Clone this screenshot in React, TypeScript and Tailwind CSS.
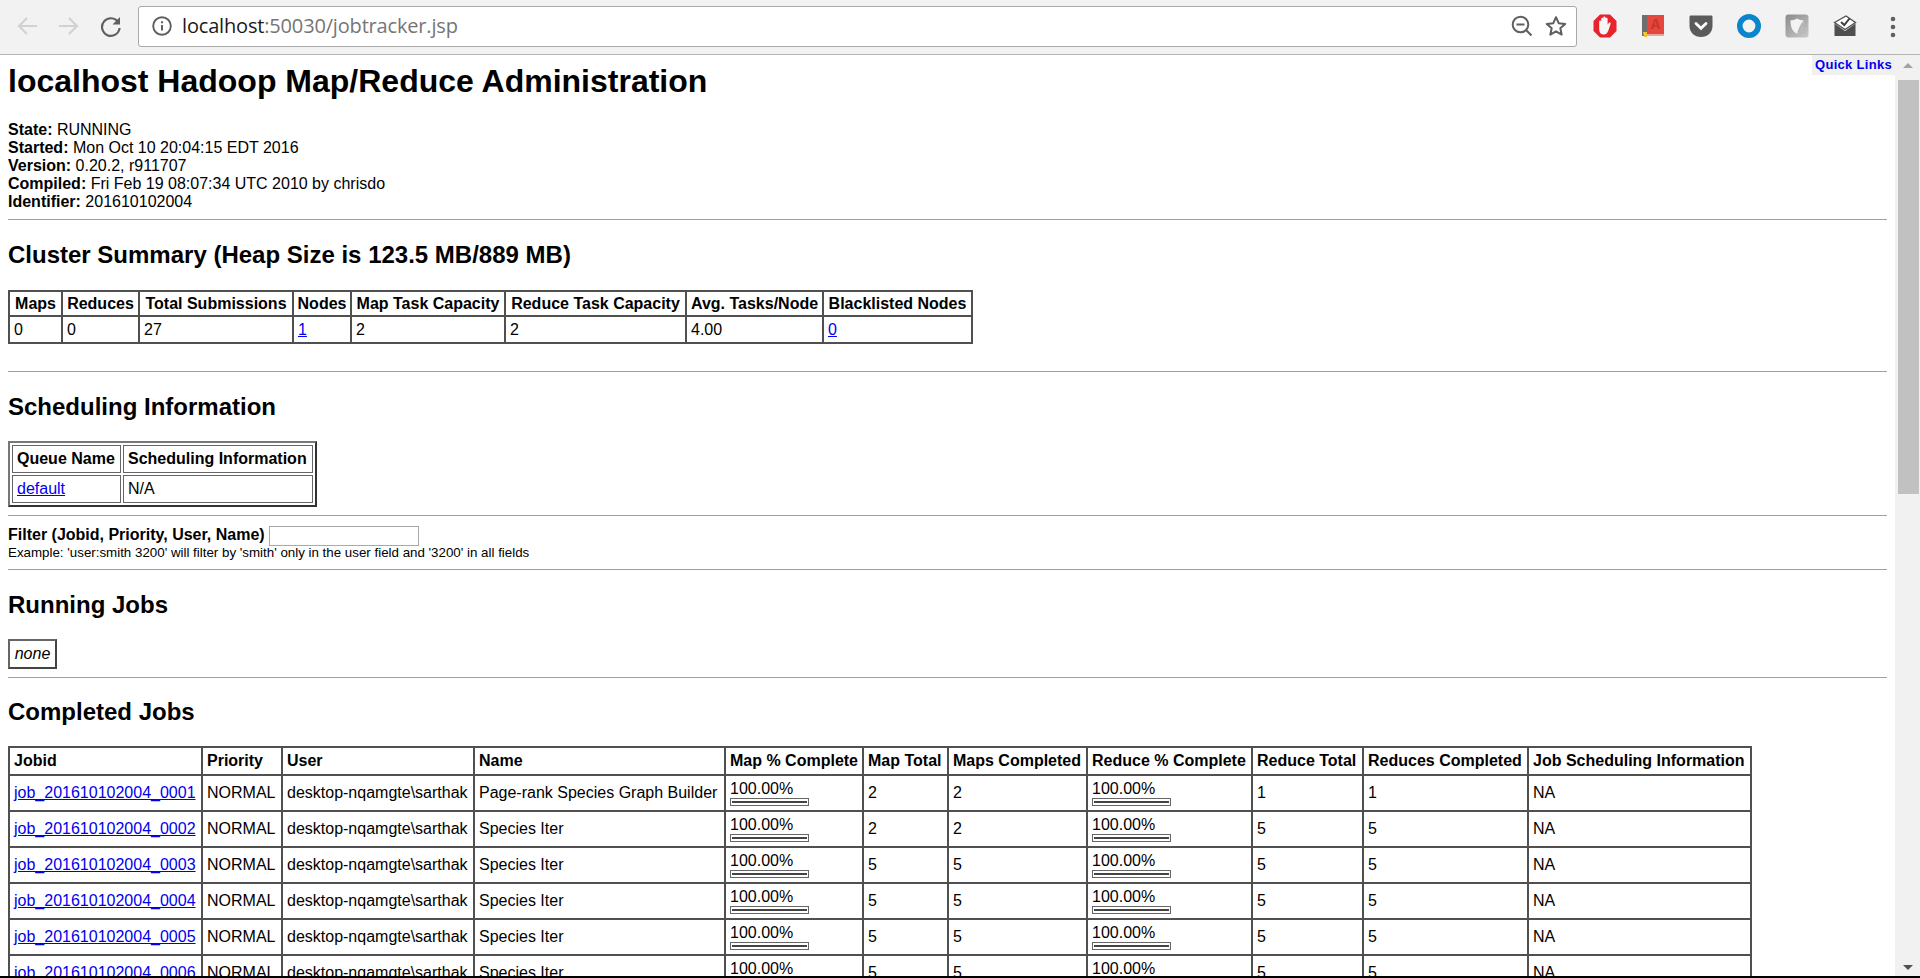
import React from "react";

const jobs = [
  ["0001", "Page-rank Species Graph Builder", "2", "2", "1", "1"],
  ["0002", "Species Iter", "2", "2", "5", "5"],
  ["0003", "Species Iter", "5", "5", "5", "5"],
  ["0004", "Species Iter", "5", "5", "5", "5"],
  ["0005", "Species Iter", "5", "5", "5", "5"],
  ["0006", "Species Iter", "5", "5", "5", "5"],
];

const th = "border-2 border-[#505050] px-[4px] text-left font-bold align-middle";
const thc = "border-2 border-[#505050] px-[2px] text-center font-bold align-middle";
const td = "border-2 border-[#505050] px-[4px] text-left font-normal align-middle";
const link = "text-[#0000ee] underline";

function Rule() {
  return <div className="h-[1px] bg-[#a0a0a0]" />;
}

function Progress() {
  return (
    <div className="leading-[18px]">
      <div>100.00%</div>
      <div className="flex h-[8px] w-[79px] items-center border border-[#666666] bg-white px-[1px]">
        <div className="h-[2px] w-full bg-[#444444]" />
      </div>
    </div>
  );
}

function Toolbar() {
  return (
    <div className="flex h-[55px] items-center border-b border-[#b4b4b4] bg-[#f2f2f2] pb-[2px] pl-[15px]">
      <svg width="24" height="24" viewBox="0 0 24 24" fill="none" stroke="#d2d2d2" strokeWidth="2.2">
        <path d="M22 12H4M12 4l-8 8 8 8" />
      </svg>
      <svg className="ml-[18px]" width="24" height="24" viewBox="0 0 24 24" fill="none" stroke="#d2d2d2" strokeWidth="2.2">
        <path d="M2 12h18M12 4l8 8-8 8" />
      </svg>
      <svg className="ml-[18px]" width="24" height="24" viewBox="0 0 24 24" fill="none">
        <path d="M19.2 8.2A8.8 8.8 0 1 0 20.6 14" stroke="#5f5f5f" strokeWidth="2.2" />
        <path d="M21 3v7.5h-7.500z" fill="#5f5f5f" />
      </svg>
      <div className="ml-[15px] flex h-[41px] w-[1439px] items-center rounded-[3px] border border-[#a9a9a9] bg-white pl-[13px] pr-[8px]">
        <svg width="20" height="20" viewBox="0 0 20 20" fill="none">
          <circle cx="10" cy="10" r="8.800" stroke="#5f5f5f" strokeWidth="1.900" />
          <path d="M10 9v5.500" stroke="#5f5f5f" strokeWidth="2" />
          <path d="M10 5.200v2" stroke="#5f5f5f" strokeWidth="2" />
        </svg>
        <span className="ml-[10px] font-['Open_Sans',sans-serif] text-[20px] tracking-[-0.17px] text-[#757575]">
          <span className="text-[#1a1a1a]">localhost</span>:50030/jobtracker.jsp
        </span>
        <svg className="ml-auto" width="22" height="22" viewBox="0 0 22 22" fill="none" stroke="#5f5f5f" strokeWidth="2">
          <circle cx="9.500" cy="9.500" r="7.800" />
          <path d="M5.500 9.500h8M15 15l5.500 5.500" />
        </svg>
        <svg className="ml-[11px]" width="24" height="24" viewBox="0 0 24 24" fill="none" stroke="#5f5f5f" strokeWidth="2">
          <path d="M12 3.200l2.700 6 6.500.7-4.900 4.300 1.400 6.400L12 17.300l-5.700 3.300 1.400-6.400-4.900-4.300 6.500-.7z" strokeLinejoin="round" />
        </svg>
      </div>
      <div className="ml-[16px] flex items-center gap-[24px]">
        <svg width="24" height="24" viewBox="0 0 24 24">
          <path d="M7 .5h10L23.500 7v10L17 23.500H7L.5 17V7z" fill="#e8232c" />
          <path d="M6.200 13V7.600c0-1.400 2-1.400 2 0V4.800c0-1.500 2.100-1.500 2.100 0V3.600c0-1.500 2.200-1.500 2.200 0v1.200c0-1.400 2.100-1.400 2.100 0v6l1.100-1.700c.9-1.100 2.500-.3 1.800 1.100l-2.300 6.800c-.7 1.900-2 3.500-4.300 3.500-3 0-4.700-2-4.700-5.300z" fill="#f6f6f6" />
        </svg>
        <svg width="24" height="24" viewBox="0 0 24 24">
          <rect x="2" y="1" width="21" height="20" fill="#e5473e" />
          <rect x="1" y="1" width="5" height="21" fill="#6e6e6e" />
          <rect x="5" y="20" width="18" height="2" fill="#e9a49e" />
          <path d="M2 18h4v5H3z" fill="#f2c233" />
          <text x="14.500" y="15" textAnchor="middle" fontFamily="Liberation Sans" fontSize="14" fontWeight="700" fill="#c8342c">A</text>
        </svg>
        <svg width="24" height="24" viewBox="0 0 24 24">
          <path d="M2 1.500h20c.600 0 1.500.400 1.500 1.500V12c0 6.500-5 11-11.500 11S.500 18.500.500 12V3c0-1.100.900-1.500 1.500-1.500z" fill="#5b5b5b" />
          <path d="M7 9.500l5 4.800 5-4.800" fill="none" stroke="#ffffff" strokeWidth="2.800" strokeLinecap="round" />
        </svg>
        <svg width="24" height="24" viewBox="0 0 24 24">
          <circle cx="12" cy="12" r="9.200" fill="none" stroke="#0a84cb" strokeWidth="5.600" />
        </svg>
        <svg width="24" height="24" viewBox="0 0 24 24">
          <defs>
            <linearGradient id="shieldbg" x1="0" y1="0" x2="0.800" y2="1">
              <stop offset="0" stopColor="#8a8a8a" />
              <stop offset="1" stopColor="#c4c4c4" />
            </linearGradient>
          </defs>
          <rect x="0.500" y="0.500" width="23" height="23" rx="3" fill="url(#shieldbg)" />
          <path d="M12 4.500c2.500 1.500 4.500 1.800 6.500 1.800 0 6.500-1.500 11-6.500 13.500-5-2.500-6.500-7-6.500-13.500 2 0 4-.3 6.500-1.800z" fill="#f3f3f3" />
          <path d="M18.500 6.300c0 6.500-1.500 11-6.500 13.500 1-4 3-9 6.500-13.500z" fill="#b5b5b5" />
        </svg>
        <svg width="24" height="24" viewBox="0 0 24 24">
          <path d="M1.500 9.500L12 17l10.500-7.500V22h-21z" fill="#4f4f4f" />
          <path d="M1.500 8.500L13 2l9.500 6.500L12 15.500z" fill="#ffffff" stroke="#4f4f4f" strokeWidth="1.300" />
          <path d="M8 8l3.300 3L16.500 4.500" fill="none" stroke="#3c3c3c" strokeWidth="2" />
        </svg>
        <svg width="24" height="24" viewBox="0 0 24 24" fill="#606060">
          <circle cx="12" cy="5" r="2.300" />
          <circle cx="12" cy="13" r="2.300" />
          <circle cx="12" cy="21" r="2.300" />
        </svg>
      </div>
    </div>
  );
}

function Summary() {
  const heads = ["Maps", "Reduces", "Total Submissions", "Nodes", "Map Task Capacity", "Reduce Task Capacity", "Avg. Tasks/Node", "Blacklisted Nodes"];
  const widths = [53, 77, 154, 58, 154, 181, 137, 149];
  return (
    <table className="mt-[21px] w-[964px] table-fixed border-collapse whitespace-nowrap">
      <colgroup>
        {widths.map((w, i) => (
          <col key={i} style={{ width: w }} />
        ))}
      </colgroup>
      <tbody>
        <tr className="h-[25px]">
          {heads.map((h) => (
            <th key={h} className={thc}>{h}</th>
          ))}
        </tr>
        <tr className="h-[27px]">
          <td className={td}>0</td>
          <td className={td}>0</td>
          <td className={td}>27</td>
          <td className={td}><span className={link}>1</span></td>
          <td className={td}>2</td>
          <td className={td}>2</td>
          <td className={td}>4.00</td>
          <td className={td}><span className={link}>0</span></td>
        </tr>
      </tbody>
    </table>
  );
}

function Scheduling() {
  const c = "border border-[#666666] px-[4px] text-left align-middle";
  return (
    <table className="mt-[20px] w-[309px] table-fixed border-separate border-spacing-[2px] border-2 border-t-[#777777] border-l-[#777777] border-r-[#333333] border-b-[#333333]">
      <colgroup>
        <col className="w-[109px]" />
        <col className="w-[190px]" />
      </colgroup>
      <tbody>
        <tr className="h-[28px]">
          <th className={`${c} font-bold`}>Queue Name</th>
          <th className={`${c} font-bold`}>Scheduling Information</th>
        </tr>
        <tr className="h-[28px]">
          <td className={c}><span className={link}>default</span></td>
          <td className={c}>N/A</td>
        </tr>
      </tbody>
    </table>
  );
}

function Jobs() {
  const heads = ["Jobid", "Priority", "User", "Name", "Map % Complete", "Map Total", "Maps Completed", "Reduce % Complete", "Reduce Total", "Reduces Completed", "Job Scheduling Information"];
  const widths = [193, 80, 192, 251, 138, 85, 139, 165, 111, 165, 223];
  return (
    <table className="mt-[20px] w-[1742px] table-fixed border-collapse whitespace-nowrap">
      <colgroup>
        {widths.map((w, i) => (
          <col key={i} style={{ width: w }} />
        ))}
      </colgroup>
      <tbody>
        <tr className="h-[28px]">
          {heads.map((h) => (
            <th key={h} className={th}>{h}</th>
          ))}
        </tr>
        {jobs.map((j) => (
          <tr key={j[0]} className="h-[36px]">
            <td className={td}><span className={link}>job_201610102004_{j[0]}</span></td>
            <td className={td}>NORMAL</td>
            <td className={td}>desktop-nqamgte\sarthak</td>
            <td className={td}>{j[1]}</td>
            <td className={td}><Progress /></td>
            <td className={td}>{j[2]}</td>
            <td className={td}>{j[3]}</td>
            <td className={td}><Progress /></td>
            <td className={td}>{j[4]}</td>
            <td className={td}>{j[5]}</td>
            <td className={td}>NA</td>
          </tr>
        ))}
      </tbody>
    </table>
  );
}

function Scrollbar() {
  return (
    <div className="flex w-[25px] shrink-0 flex-col items-center bg-[#f1f1f1]">
      <div className="mt-[8px] h-0 w-0 border-x-[5px] border-b-[5px] border-x-transparent border-b-[#a3a3a3]" />
      <div className="ml-[1px] mt-[12px] h-[414px] w-[21px] bg-[#c1c1c1]" />
      <div className="mb-[6px] mt-auto h-0 w-0 border-x-[5px] border-t-[5px] border-x-transparent border-t-[#505050]" />
    </div>
  );
}

export default function App() {
  return (
    <div className="flex h-[978px] w-[1920px] flex-col overflow-hidden bg-white font-['Liberation_Sans',Arial,sans-serif] text-[16px] leading-[18px] text-black">
      <Toolbar />
      <div className="relative flex min-h-0 flex-1">
        <div className="min-w-0 flex-1 overflow-hidden px-[8px]">
          <h1 className="mt-[8px] text-[32px] font-bold leading-[36px]">localhost Hadoop Map/Reduce Administration</h1>
          <div className="mt-[22px]">
            <div><b>State:</b> RUNNING</div>
            <div><b>Started:</b> Mon Oct 10 20:04:15 EDT 2016</div>
            <div><b>Version:</b> 0.20.2, r911707</div>
            <div><b>Compiled:</b> Fri Feb 19 08:07:34 UTC 2010 by chrisdo</div>
            <div><b>Identifier:</b> 201610102004</div>
          </div>
          <div className="mt-[8px]"><Rule /></div>
          <h2 className="mt-[21px] text-[24px] font-bold leading-[28px]">Cluster Summary (Heap Size is 123.5 MB/889 MB)</h2>
          <Summary />
          <div className="mt-[27px]"><Rule /></div>
          <h2 className="mt-[21px] text-[24px] font-bold leading-[28px]">Scheduling Information</h2>
          <Scheduling />
          <div className="mt-[8px]"><Rule /></div>
          <div className="mt-[10px] flex h-[20px] items-center">
            <b className="mb-[3px]">Filter (Jobid, Priority, User, Name)</b>
            <div className="ml-[4px] h-[20px] w-[150px] border border-[#a9a9a9] bg-white" />
          </div>
          <div className="text-[13.33px] leading-[14px]">Example: 'user:smith 3200' will filter by 'smith' only in the user field and '3200' in all fields</div>
          <div className="mt-[9px]"><Rule /></div>
          <h2 className="mt-[21px] text-[24px] font-bold leading-[28px]">Running Jobs</h2>
          <div className="mt-[20px] flex h-[30px] w-[49px] items-center justify-center border-2 border-t-[#666666] border-l-[#666666] border-r-[#444444] border-b-[#444444] italic">none</div>
          <div className="mt-[8px]"><Rule /></div>
          <h2 className="mt-[20px] text-[24px] font-bold leading-[28px]">Completed Jobs</h2>
          <Jobs />
        </div>
        <Scrollbar />
        <div className="absolute right-[25px] top-0 flex h-[20px] w-[83px] items-center justify-center bg-[#f0f0f0] text-[13px] font-bold tracking-[0.3px] text-[#0000ee]">Quick Links</div>
      </div>
      <div className="h-[2px] shrink-0 bg-black" />
    </div>
  );
}
